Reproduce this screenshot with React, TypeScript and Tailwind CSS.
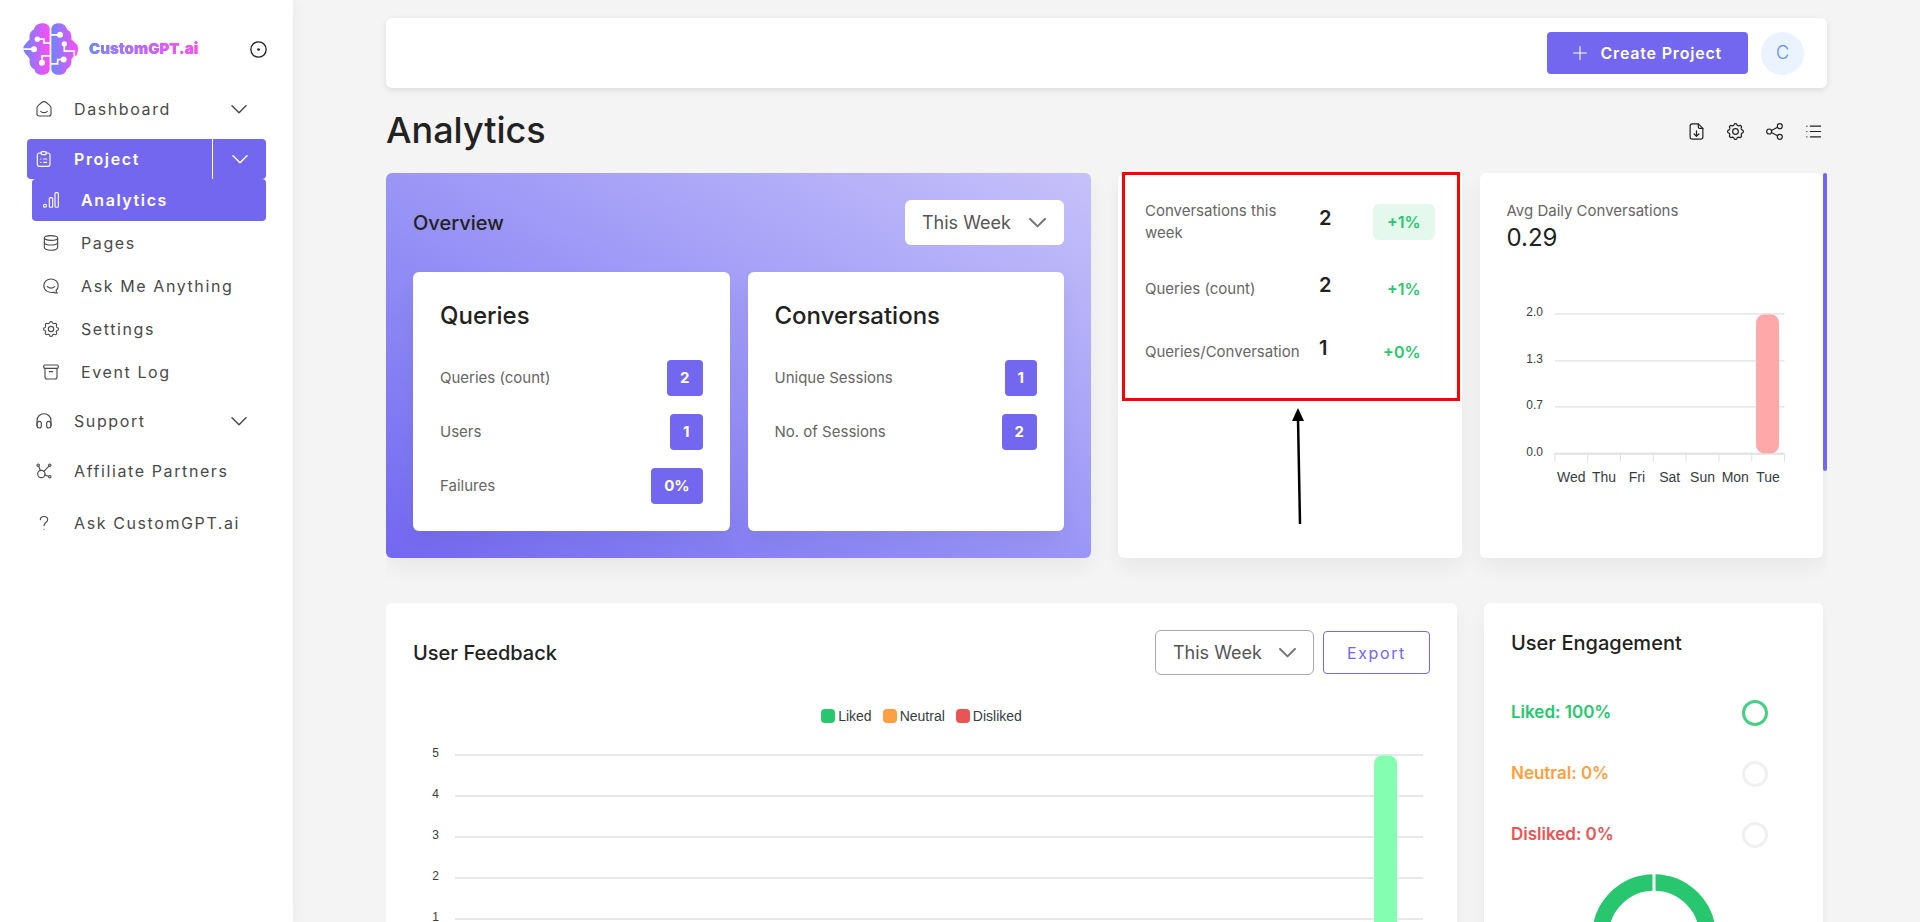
import React from "react";

type IconProps = { className?: string };

function Icon({ className = "size-4", children }: { className?: string; children: React.ReactNode }) {
  return (
    <svg
      viewBox="0 0 24 24"
      className={className}
      fill="none"
      stroke="currentColor"
      strokeWidth="1.7"
      strokeLinecap="round"
      strokeLinejoin="round"
      aria-hidden="true"
    >
      {children}
    </svg>
  );
}

const gearPath =
  Array.from({ length: 96 }, (_, i) => {
    const a = (i / 96) * Math.PI * 2;
    const r = 10 + 1.1 * Math.tanh(2 * Math.cos(8 * a));
    return `${i === 0 ? "M" : "L"}${(12 + r * Math.sin(a)).toFixed(2)} ${(12 - r * Math.cos(a)).toFixed(2)}`;
  }).join("") + "Z";

const HomeIcon = (p: IconProps) => (
  <Icon {...p}>
    <path d="M1.5 11c0-2 .6-3.200 2-4.400L8.500 2.300c2.200-1.800 4.800-1.800 7 0l5 4.300c1.400 1.200 2 2.400 2 4.400v8.500a3 3 0 0 1-3 3h-15a3 3 0 0 1-3-3z" />
    <path d="M7 15.500c2.800 2.300 7.200 2.300 10 0" />
  </Icon>
);
const ClipboardIcon = (p: IconProps) => (
  <Icon {...p}>
    <path d="M8 3H5a3 3 0 0 0-3 3v14a3 3 0 0 0 3 3h13a3 3 0 0 0 3-3V6a3 3 0 0 0-3-3h-3" />
    <rect x="7.500" y="1" width="8" height="4.500" rx="2" />
    <path d="M7 12h.5M11.500 12h4.500M7 17h.5M11.500 17h4.500" />
  </Icon>
);
const BarsIcon = (p: IconProps) => (
  <Icon {...p}>
    <circle cx="3" cy="20.500" r="2.200" />
    <rect x="9.500" y="8.500" width="5" height="14.300" rx="1.500" />
    <rect x="18" y="1" width="5" height="21.800" rx="1.500" />
  </Icon>
);
const DatabaseIcon = (p: IconProps) => (
  <Icon {...p}>
    <ellipse cx="12" cy="4.500" rx="10" ry="3.500" />
    <path d="M2 4.500v14c0 2.500 4 4.300 10 4.300s10-1.800 10-4.300v-14" />
    <path d="M2 11.500c1 2.200 4.500 3.500 10 3.500s9-1.300 10-3.500" />
  </Icon>
);
const ChatIcon = (p: IconProps) => (
  <Icon {...p}>
    <path d="M21.500 22.500c-2 .3-4-.3-5.500-1.200C9 23 1.200 18.500 1.200 11.500 1.200 5.500 6 1.500 12 1.500s10.800 4 10.800 10c0 3-1.300 5.500-3.300 7.300.2 1.700.8 2.900 2 3.700z" />
    <path d="M6.500 13c3 3 8 3 11 0" />
  </Icon>
);
const GearIcon = (p: IconProps) => (
  <Icon {...p}>
    <path d={gearPath} />
    <circle cx="12" cy="12" r="4" />
  </Icon>
);
const ArchiveIcon = (p: IconProps) => (
  <Icon {...p}>
    <rect x="1" y="1.500" width="22" height="5" rx="2" />
    <path d="M3 6.500v13a3 3 0 0 0 3 3h12a3 3 0 0 0 3-3v-13M9.500 11.500h5" />
  </Icon>
);
const HeadphonesIcon = (p: IconProps) => (
  <Icon {...p}>
    <path d="M1.500 19v-7.500C1.500 5.500 6 1.200 12 1.200S22.500 5.500 22.500 11.500V19" />
    <path d="M1.500 18c0-4 1-5.500 3.500-5.500s3 1.200 3 3V19c0 2.500-1 3.500-3 3.500-2.500 0-3.500-1.500-3.500-4.500zM22.500 18c0-4-1-5.500-3.500-5.500s-3 1.200-3 3V19c0 2.500 1 3.500 3 3.500 2.500 0 3.500-1.500 3.500-4.500z" />
  </Icon>
);
const NetworkIcon = (p: IconProps) => (
  <Icon {...p}>
    <circle cx="8" cy="16.500" r="5.500" />
    <circle cx="3.300" cy="3.300" r="1.800" />
    <circle cx="20.700" cy="3.300" r="1.800" />
    <circle cx="20.700" cy="20.500" r="1.800" />
    <path d="M4.200 5c.8 2.500 1.600 4 2.300 6M19.500 4.700l-7.700 7.800M13.300 18.200l5.500 1.700" />
  </Icon>
);
const QuestionIcon = (p: IconProps) => (
  <Icon {...p}>
    <path d="M6.500 7c0-3 2.300-4.800 5.500-4.800s5.500 1.800 5.500 4.800c0 4.500-5.500 4-5.500 9.200M12 21.300v.2" />
  </Icon>
);
const ChevronIcon = ({ className, bold = false }: IconProps & { bold?: boolean }) => (
  <Icon className={className}>
    <path d="M1.500 7 12 17.500 22.500 7" strokeWidth={bold ? 2.900 : 2.200} />
  </Icon>
);
const FileDownIcon = (p: IconProps) => (
  <Icon {...p}>
    <path d="M14.500 1.200H6a3 3 0 0 0-3 3v15.600a3 3 0 0 0 3 3h12a3 3 0 0 0 3-3V7.500z" />
    <path d="M14.500 1.200v4.300a2 2 0 0 0 2 2H21M12 11v7.500M8.700 15.500l3.300 3.300 3.300-3.300" />
  </Icon>
);
const ShareIcon = (p: IconProps) => (
  <Icon {...p}>
    <circle cx="4.500" cy="12" r="3.500" />
    <circle cx="19.500" cy="4.500" r="3.500" />
    <circle cx="19.500" cy="19.500" r="3.500" />
    <path d="m7.700 10.500 8.600-4.400M7.700 13.500l8.600 4.400" />
  </Icon>
);
const ListIcon = (p: IconProps) => (
  <Icon {...p}>
    <path d="M7.500 4.500h14.500M7.500 12h14.500M7.500 19.500h14.500M2.500 4.500h.3M2.500 12h.3M2.500 19.500h.3" />
  </Icon>
);
const PlusIcon = (p: IconProps) => (
  <Icon {...p}>
    <path d="M12 1v22M1 12h22" strokeWidth="1.900" />
  </Icon>
);
const TargetIcon = (p: IconProps) => (
  <Icon {...p}>
    <circle cx="12" cy="12" r="10.800" strokeWidth="1.900" />
    <circle cx="12" cy="12" r="1.900" fill="currentColor" stroke="none" />
  </Icon>
);

function BrainLogo() {
  return (
    <svg viewBox="70 69 165 155" className="h-[52px] w-[55px] shrink-0" aria-hidden="true">
      <defs>
        <linearGradient id="halfLeft" gradientUnits="userSpaceOnUse" x1="70" y1="147" x2="150" y2="147">
          <stop offset="0" stopColor="#6a86ff" />
          <stop offset="1" stopColor="#ff4bf3" />
        </linearGradient>
        <linearGradient id="halfRight" gradientUnits="userSpaceOnUse" x1="155" y1="147" x2="235" y2="147">
          <stop offset="0" stopColor="#6a86ff" />
          <stop offset="1" stopColor="#ff4bf3" />
        </linearGradient>
      </defs>
      <path
        fill="url(#halfLeft)"
        d="M150 84C148 74 140 69 127 69c-14 0-22 9-24 19-11 4-15 16-13 29-6 7-12 13-17 20-3 4-3 12 0 17 4 8 13 14 17 23-2 14 3 25 14 30 3 11 10 17 23 17s21-6 23-16z"
      />
      <path
        fill="url(#halfRight)"
        d="M155 84C157 74 165 69 178 69c14 0 22 9 24 19 11 4 15 16 13 29 6 7 12 10 17 17 4 6 4 17-1 31-5 3-12 5-16 12 2 14-3 25-14 30-3 11-10 17-23 17s-21-6-23-16z"
      />
      <g fill="none" stroke="#fff" strokeWidth="5">
        <path d="M113 117h20v12h18M103 147H68M127 188v-21h24" />
        <path d="M181 104h-27M194 131v22h30v18M192 178h-18v13h-20" />
      </g>
      <g fill="#fff">
        <circle cx="113" cy="117" r="8" />
        <circle cx="103" cy="147" r="9" />
        <circle cx="127" cy="188" r="9" />
        <circle cx="181" cy="104" r="9" />
        <circle cx="194" cy="131" r="8" />
        <circle cx="192" cy="178" r="9" />
      </g>
    </svg>
  );
}

function NavItem({
  icon,
  label,
  className = "",
  chevron = false,
}: {
  icon: React.ReactNode;
  label: string;
  className?: string;
  chevron?: boolean;
}) {
  return (
    <li className={`flex h-10 items-center ${className}`}>
      <a href="#" className="flex flex-1 items-center gap-[22px] pl-[9px]">
        {icon}
        <span>{label}</span>
      </a>
      {chevron && (
        <button type="button" aria-label={`Expand ${label}`} className="flex w-[54px] justify-center">
          <ChevronIcon />
        </button>
      )}
    </li>
  );
}

const subItems = [
  { label: "Pages", icon: <DatabaseIcon /> },
  { label: "Ask Me Anything", icon: <ChatIcon /> },
  { label: "Settings", icon: <GearIcon /> },
  { label: "Event Log", icon: <ArchiveIcon /> },
];

function Sidebar() {
  return (
    <aside className="z-10 flex w-[293px] shrink-0 flex-col bg-white shadow-[0_0_15px_rgba(34,41,47,0.06)]">
      <div className="flex items-center pt-[23px] pr-[26px] pl-[23px]">
        <BrainLogo />
        <span className="ml-[11px] flex-1 bg-gradient-to-r from-[#6a86ff] via-[#c562fb] to-[#ff4bf3] bg-clip-text text-[15px] font-black text-transparent">
          <span className="bg-gradient-to-r from-[#6a86ff] via-[#c562fb] to-[#ff4bf3] bg-clip-text">CustomGPT.ai</span>
        </span>
        <button type="button" aria-label="Toggle sidebar" className="text-[#222]">
          <TargetIcon className="size-[17px]" />
        </button>
      </div>
      <nav className="mt-3.5 px-[27px] text-base tracking-widest text-[#4a4a4a]">
        <ul>
          <NavItem icon={<HomeIcon />} label="Dashboard" chevron />
          <li className="mt-2.5">
            <div className="flex h-10 rounded bg-[#7367f0] font-semibold text-white">
              <a href="#" className="flex flex-1 items-center gap-[22px] pl-[9px]">
                <ClipboardIcon />
                <span>Project</span>
              </a>
              <button
                type="button"
                aria-label="Collapse Project"
                className="flex w-[54px] items-center justify-center border-l border-white"
              >
                <ChevronIcon />
              </button>
            </div>
            <ul className="pl-[5px]">
              <li>
                <a
                  href="#"
                  aria-current="page"
                  className="flex h-[42px] items-center gap-[22px] rounded bg-[#7367f0] pl-[11px] font-semibold text-white"
                >
                  <BarsIcon />
                  <span>Analytics</span>
                </a>
              </li>
              {subItems.map((item) => (
                <li key={item.label}>
                  <a href="#" className="flex h-[43px] items-center gap-[22px] pl-[11px]">
                    {item.icon}
                    <span>{item.label}</span>
                  </a>
                </li>
              ))}
            </ul>
          </li>
          <NavItem className="mt-2" icon={<HeadphonesIcon />} label="Support" chevron />
          <NavItem className="mt-2.5" icon={<NetworkIcon />} label="Affiliate Partners" />
          <NavItem className="mt-3" icon={<QuestionIcon />} label="Ask CustomGPT.ai" />
        </ul>
      </nav>
    </aside>
  );
}

function PeriodSelect({ label, className = "" }: { label: string; className?: string }) {
  return (
    <div className="relative">
      <select
        aria-label={label}
        defaultValue="week"
        className={`h-[45px] w-[159px] appearance-none rounded-md bg-white pl-[17px] text-lg text-[#555] ${className}`}
      >
        <option value="week">This Week</option>
        <option value="month">This Month</option>
      </select>
      <span className="pointer-events-none absolute inset-y-0 right-[18px] flex items-center text-[#777]">
        <ChevronIcon className="size-[17px]" bold />
      </span>
    </div>
  );
}

const cardShadow = "shadow-[0_10px_20px_rgba(0,0,0,0.05)]";

function MetricCard({ title, rows }: { title: string; rows: [string, string][] }) {
  return (
    <section className={`rounded-md bg-white p-[27px] ${cardShadow}`}>
      <h3 className="text-2xl leading-[34px] font-medium text-[#222]">{title}</h3>
      <dl className="mt-[27px] flex flex-col gap-[18px]">
        {rows.map(([name, value]) => (
          <div key={name} className="flex items-center justify-between">
            <dt className="text-[15px] text-[#666]">{name}</dt>
            <dd className="flex h-9 items-center rounded bg-[#7367f0] px-[13px] text-[15px] font-bold text-white">
              {value}
            </dd>
          </div>
        ))}
      </dl>
    </section>
  );
}

function Overview() {
  return (
    <section
      className={`flex flex-col rounded-md bg-gradient-to-tr from-[#7367f0] to-[#c7c1f9] p-[27px] ${cardShadow}`}
    >
      <div className="flex items-center justify-between">
        <h2 className="text-xl font-medium text-[#222]">Overview</h2>
        <PeriodSelect label="Overview period" />
      </div>
      <div className="mt-[27px] grid flex-1 grid-cols-2 gap-[18px]">
        <MetricCard
          title="Queries"
          rows={[
            ["Queries (count)", "2"],
            ["Users", "1"],
            ["Failures", "0%"],
          ]}
        />
        <MetricCard
          title="Conversations"
          rows={[
            ["Unique Sessions", "1"],
            ["No. of Sessions", "2"],
          ]}
        />
      </div>
    </section>
  );
}

function TrendRow({ name, value, change, filled = false }: { name: string; value: string; change: string; filled?: boolean }) {
  return (
    <div className="grid min-h-9 grid-cols-[156px_1fr_auto] items-center gap-x-[18px]">
      <dt className="text-[15px] leading-[22px] text-[#666]">{name}</dt>
      <dd className="pb-2 text-xl leading-6 font-semibold text-[#222]">{value}</dd>
      <dd
        className={`flex h-9 items-center rounded-md px-3.5 text-base font-semibold text-[#28c76f] ${
          filled ? "bg-[#e5f8ed]" : ""
        }`}
      >
        {change}
      </dd>
    </div>
  );
}

function Trends() {
  return (
    <section className={`relative rounded-md bg-white p-[27px] ${cardShadow}`}>
      <dl className="flex flex-col gap-[27px]">
        <TrendRow name="Conversations this week" value="2" change="+1%" filled />
        <TrendRow name="Queries (count)" value="2" change="+1%" />
        <TrendRow name="Queries/Conversation" value="1" change="+0%" />
      </dl>
      <div className="absolute -top-px right-0.5 left-1 h-[229px] border-[3px] border-[#ff0000]" />
      <svg viewBox="0 0 16 118" className="absolute top-[235px] left-[172px] h-[118px] w-4" aria-hidden="true">
        <path d="M8 10 10 116" stroke="#000" strokeWidth="2.500" />
        <path d="M8 0 14 13H2z" fill="#000" />
      </svg>
    </section>
  );
}

const days = ["Wed", "Thu", "Fri", "Sat", "Sun", "Mon", "Tue"];
const axisFont = "font-['Liberation_Sans',Arial,sans-serif]";

function DailyConversations() {
  const ticks: [string, number][] = [
    ["2.0", 18],
    ["1.3", 65],
    ["0.7", 111],
    ["0.0", 158],
  ];
  return (
    <section className={`rounded-md bg-white p-[27px] ${cardShadow}`}>
      <p className="text-[15px] leading-[22px] text-[#666]">Avg Daily Conversations</p>
      <p className="text-2xl leading-8 text-[#222]">0.29</p>
      <svg viewBox="0 0 290 196" className={`mt-[42px] w-full ${axisFont}`} fill="#373d3f">
        {ticks.map(([label, y]) => (
          <g key={label}>
            <line x1="48" x2="278" y1={y} y2={y} stroke="#e0e0e0" strokeWidth={label === "0.0" ? 2 : 1.300} />
            <text x="36" y={y + 2} textAnchor="end" fontSize="12">
              {label}
            </text>
          </g>
        ))}
        {[...days, "end"].map((d, i) => (
          <line key={d} x1={48 + i * 32.860} x2={48 + i * 32.860} y1="158" y2="166" stroke="#e0e0e0" />
        ))}
        {days.map((d, i) => (
          <text key={d} x={64.400 + i * 32.860} y="186" textAnchor="middle" fontSize="14">
            {d}
          </text>
        ))}
        <rect x="249.500" y="18.500" width="23" height="139" rx="8" fill="#ffa8a9" />
      </svg>
    </section>
  );
}

function Feedback() {
  const legend = [
    { label: "Liked", color: "bg-[#28c76f]" },
    { label: "Neutral", color: "bg-[#ff9f43]" },
    { label: "Disliked", color: "bg-[#ea5455]" },
  ];
  return (
    <section className={`rounded-md bg-white p-[27px] ${cardShadow}`}>
      <div className="flex items-center justify-between">
        <h2 className="text-xl font-medium text-[#222]">User Feedback</h2>
        <div className="flex items-center gap-[9px]">
          <PeriodSelect label="Feedback period" className="border border-[#a8a8a8]" />
          <button
            type="button"
            className="h-[43px] w-[107px] rounded border border-[#7367f0] text-base tracking-widest text-[#7367f0]"
          >
            Export
          </button>
        </div>
      </div>
      <ul className={`mt-[31px] flex justify-center gap-[11px] text-sm text-[#373d3f] ${axisFont}`}>
        {legend.map((item) => (
          <li key={item.label} className="flex items-center gap-[3px]">
            <span className={`size-3.5 rounded-sm ${item.color}`} />
            {item.label}
          </li>
        ))}
      </ul>
      <svg className={`mt-[19px] h-[260px] w-full ${axisFont}`} fill="#373d3f">
        {[5, 4, 3, 2, 1, 0].map((n) => (
          <React.Fragment key={n}>
            <line x1="42" x2="99.300%" y1={10 + (5 - n) * 41} y2={10 + (5 - n) * 41} stroke="#e0e0e0" strokeWidth="1.300" />
            <text x="26" y={12 + (5 - n) * 41} textAnchor="end" fontSize="12">
              {n}
            </text>
          </React.Fragment>
        ))}
        <rect x="94.500%" y="10.500" width="23" height="204" rx="8" fill="#84ffb1" />
      </svg>
    </section>
  );
}

function Engagement() {
  const rows = [
    { text: "Liked: 100%", color: "text-[#28c76f]", ring: "border-[#48cf85]" },
    { text: "Neutral: 0%", color: "text-[#ff9f43]", ring: "border-[#f0f0f0]" },
    { text: "Disliked: 0%", color: "text-[#ea5455]", ring: "border-[#f0f0f0]" },
  ];
  return (
    <section className={`rounded-md bg-white p-[27px] ${cardShadow}`}>
      <h2 className="text-xl leading-[26px] font-medium text-[#222]">User Engagement</h2>
      <ul className="mt-[45px] flex flex-col gap-[37px]">
        {rows.map((row) => (
          <li
            key={row.text}
            className={`flex h-6 items-center justify-between pr-7 text-[17px] font-semibold ${row.color}`}
          >
            {row.text}
            <span className={`size-[26px] rounded-full border-3 ${row.ring}`} />
          </li>
        ))}
      </ul>
      <svg viewBox="0 0 124 124" className="mx-auto mt-[27px] size-[124px]" aria-hidden="true">
        <circle cx="62" cy="62" r="53.600" fill="none" stroke="#28c76f" strokeWidth="16.500" />
        <path d="M62 0v20" stroke="#fff" strokeWidth="3" />
      </svg>
    </section>
  );
}

export default function App() {
  return (
    <div className="flex h-screen overflow-hidden bg-[#f4f4f4] font-['Inter',sans-serif]">
      <Sidebar />
      <main className="flex min-w-0 flex-1 flex-col px-[93px] pt-[18px]">
        <header className="flex h-[70px] shrink-0 items-center justify-end gap-[13px] rounded-md bg-white pr-[23px] shadow-[0_2px_6px_rgba(0,0,0,0.1)]">
          <button
            type="button"
            className="flex h-[42px] items-center gap-3.5 rounded bg-[#7367f0] px-[26px] text-base font-semibold tracking-wider text-white"
          >
            <PlusIcon className="size-3.5" />
            Create Project
          </button>
          <button
            type="button"
            aria-label="Account"
            className="flex size-[43px] items-center justify-center rounded-full bg-[#ebf3fe] text-lg font-light text-[#5b8def]"
          >
            C
          </button>
        </header>
        <div className="flex h-[84px] shrink-0 items-center justify-between">
          <h1 className="text-4xl font-medium text-[#222]">Analytics</h1>
          <div className="flex gap-[22px] pt-0.5 pr-[5px] text-[#222]">
            <button type="button" aria-label="Download report">
              <FileDownIcon className="size-[17px]" />
            </button>
            <button type="button" aria-label="Settings">
              <GearIcon className="size-[17px]" />
            </button>
            <button type="button" aria-label="Share">
              <ShareIcon className="size-[17px]" />
            </button>
            <button type="button" aria-label="List view">
              <ListIcon className="size-[17px]" />
            </button>
          </div>
        </div>
        <div className="relative flex min-h-0 flex-1 flex-col">
          <div className="flex min-h-0 flex-1 flex-col overflow-y-auto pt-px pr-1 [scrollbar-width:none]">
            <div className="grid grid-cols-2 gap-[27px]">
              <Overview />
              <div className="grid grid-cols-2 gap-[18px]">
                <Trends />
                <DailyConversations />
              </div>
            </div>
            <div className="mt-[45px] grid grid-cols-[1071fr_339fr] gap-[27px] pb-8">
              <Feedback />
              <Engagement />
            </div>
          </div>
          <div className="absolute top-px right-0 h-[298px] w-1 rounded-full bg-[#7367f0]" />
        </div>
      </main>
    </div>
  );
}
